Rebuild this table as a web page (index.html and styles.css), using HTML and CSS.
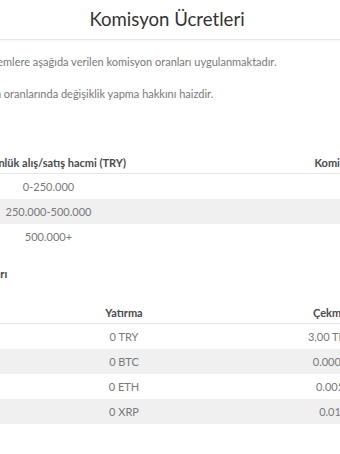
FILE: index.html
```html
<!DOCTYPE html>
<html lang="tr">
<head>
<meta charset="utf-8">
<title>Komisyon Ücretleri</title>
<link rel="stylesheet" href="styles.css">
</head>
<body>
<div class="page">
  <header class="page-header">
    <h1 class="page-title">Komisyon Ücretleri</h1>
  </header>
  <main class="content">
    <p class="text text-first">Borsamızda gerçekleştirilen işlemlere aşağıda verilen komisyon oranları uygulanmaktadır.</p>
    <p class="text">Şirketimiz her zaman komisyon oranlarında değişiklik yapma hakkını haizdir.</p>

    <h3 class="section-title">İşlem Komisyonları</h3>
    <table class="fee-table volume-table">
      <colgroup><col class="col-volume"><col class="col-rate"></colgroup>
      <thead>
        <tr><th>30 günlük alış/satış hacmi (TRY)</th><th>Komisyon Oranı (%)</th></tr>
      </thead>
      <tbody>
        <tr><td>0-250.000</td><td>0,25</td></tr>
        <tr><td>250.000-500.000</td><td>0,20</td></tr>
        <tr><td>500.000+</td><td>0,15</td></tr>
      </tbody>
    </table>

    <h3 class="section-title">Yatırma ve Çekme Komisyonları</h3>
    <table class="fee-table transfer-table">
      <colgroup><col class="col-asset"><col class="col-deposit"><col class="col-withdraw"></colgroup>
      <thead>
        <tr><th>Birim</th><th>Yatırma</th><th>Çekme</th></tr>
      </thead>
      <tbody>
        <tr><td>Türk Lirası</td><td>0 TRY</td><td>3,00 TRY</td></tr>
        <tr><td>Bitcoin</td><td>0 BTC</td><td>0.0005</td></tr>
        <tr><td>Ethereum</td><td>0 ETH</td><td>0.005</td></tr>
        <tr><td>Ripple</td><td>0 XRP</td><td>0.01</td></tr>
      </tbody>
    </table>
  </main>
</div>
</body>
</html>
```
FILE: styles.css
```css
html, body {
  margin: 0;
  padding: 0;
  overflow: hidden;
  background: #ffffff;
}

body {
  font-family: Lato, "Open Sans", sans-serif;
  font-size: 11px;
  line-height: 16px;
  color: #787878;
}

/* the visible frame is a crop of a wider, centred page */
.page {
  width: 700px;
  margin-left: -183px;
}

.page-header {
  height: 39px;
  border-bottom: 1px solid #e8e8e8;
  box-shadow: 0 1px 2px rgba(0, 0, 0, 0.03);
}

.page-title {
  margin: 0;
  font-size: 18.6px;
  font-weight: 400;
  line-height: 39px;
  text-align: center;
  color: #333333;
}

.content {
  padding: 0 57px 0 36px;
}

.text {
  margin: 16px 0 0;
}

.text-first {
  margin-top: 14px;
}

.section-title {
  margin: 17px 0 0;
  font-size: 11px;
  font-weight: 700;
  line-height: 16px;
  color: #444444;
}

.text + .section-title {
  margin-top: 15px;
}

.fee-table {
  margin-top: 17px;
  border-collapse: collapse;
  table-layout: fixed;
}

.volume-table {
  width: 628px;
  margin-top: 16px;
}

.transfer-table {
  width: 607px;
}

.col-volume { width: 391px; }
.col-rate { width: 237px; }
.col-asset { width: 195px; }
.col-deposit { width: 152px; }
.col-withdraw { width: 260px; }

.fee-table th {
  padding: 6px 8px 2px;
  height: 16px;
  font-weight: 700;
  color: #4a4a4a;
  text-align: center;
  border-bottom: 1px solid #e6e6e6;
}

.fee-table td {
  padding: 5px 8px 4px;
  height: 16px;
  text-align: center;
  color: #787878;
}

.fee-table tbody tr:nth-child(even) td {
  background: #f0f0f0;
}
```
